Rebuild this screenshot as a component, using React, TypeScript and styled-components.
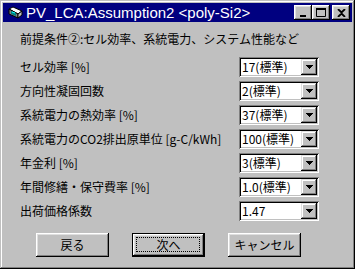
import React from 'react'
import styled, { createGlobalStyle } from 'styled-components'

const GlobalStyle = createGlobalStyle`
  html, body { margin: 0; padding: 0; background: #c0c0c0; }
  * { box-sizing: border-box; }
`

const jp = `"Noto Sans CJK JP", "Liberation Sans", sans-serif`

const Window = styled.div`
  width: 355px;
  height: 269px;
  padding: 3px;
  background: #c0c0c0;
  box-shadow: inset -1px -1px #000, inset 1px 1px #c0c0c0,
    inset -2px -2px #808080, inset 2px 2px #fff;
  font-family: ${jp};
  font-size: 12px;
  color: #000;
  display: flex;
  flex-direction: column;
`

const TitleBar = styled.div`
  height: 19px;
  background: #000080;
  display: flex;
  align-items: center;
  padding: 0 2px 0 5px;
`

const TitleText = styled.div`
  flex: 1;
  margin-left: 2px;
  color: #fff;
  font-family: "Liberation Sans", Arial, sans-serif;
  font-size: 15px;
  line-height: 19px;
  white-space: nowrap;
`

const CaptionButtons = styled.div`
  display: flex;
  align-items: center;
`

const CaptionButton = styled.div<{ $gap?: boolean }>`
  width: 18px;
  height: 15px;
  margin-left: ${p => (p.$gap ? '2px' : '0')};
  background: #c0c0c0;
  box-shadow: inset -1px -1px #000, inset 1px 1px #fff,
    inset -2px -2px #808080, inset 2px 2px #dfdfdf;
  display: flex;
  align-items: center;
  justify-content: center;
`

const Body = styled.div`
  flex: 1;
  padding: 7px 0 0 17px;
  display: flex;
  flex-direction: column;
`

const Intro = styled.div`
  line-height: 20px;
  white-space: nowrap;
`

const Form = styled.div`
  margin-top: 6px;
  display: grid;
  grid-template-columns: 219px 80px;
  grid-auto-rows: 24px;
  align-items: center;
`

const Label = styled.div`
  white-space: nowrap;
  line-height: 20px;
`

const Combo = styled.div`
  height: 20px;
  background: #fff;
  display: flex;
  align-items: center;
  padding: 2px;
  box-shadow: inset 1px 1px #808080, inset -1px -1px #fff,
    inset 2px 2px #000, inset -2px -2px #c0c0c0;
`

const ComboValue = styled.div`
  flex: 1;
  padding-left: 1px;
  line-height: 16px;
  white-space: nowrap;
  overflow: hidden;
`

const DropButton = styled.div`
  width: 16px;
  height: 16px;
  background: #c0c0c0;
  box-shadow: inset -1px -1px #000, inset 1px 1px #dfdfdf,
    inset -2px -2px #808080, inset 2px 2px #fff;
  display: flex;
  align-items: center;
  justify-content: center;
`

const ButtonRow = styled.div`
  margin-top: 10px;
  padding-left: 16px;
  display: flex;
  gap: 23px;
`

const PushButton = styled.div<{ $default?: boolean }>`
  width: 73px;
  height: 24px;
  background: #c0c0c0;
  display: flex;
  align-items: center;
  justify-content: center;
  position: relative;
  border: ${p => (p.$default ? '1px solid #000' : 'none')};
  box-shadow: inset -1px -1px #000, inset 1px 1px #fff,
    inset -2px -2px #808080, inset 2px 2px #dfdfdf;
  line-height: 16px;
`

const FocusRing = styled.div`
  position: absolute;
  inset: 3px 4px 4px 3px;
  border: 1px dotted #000;
`

const Arrow = () => (
  <svg width="7" height="4" viewBox="0 0 7 4">
    <path d="M0 0h7v1H0zM1 1h5v1H1zM2 2h3v1H2zM3 3h1v1H3z" fill="#000" />
  </svg>
)

const AppIcon = () => (
  <svg width="16" height="16" viewBox="0 0 16 16">
    <path d="M1 4l4-2 9 4-4 3z" fill="#fff" stroke="#000" strokeWidth="1" />
    <path d="M1 4v5l9 4v-4z" fill="#808080" stroke="#000" strokeWidth="1" />
    <path d="M10 9l4-3v4l-4 3z" fill="#c0c0c0" stroke="#000" strokeWidth="1" />
    <path d="M3 6l5 2v3l-5-2z" fill="#008080" />
    <path d="M4 7l3 1" stroke="#00ffff" strokeWidth="1" />
  </svg>
)

const rows = [
  ['セル効率 [%]', '17(標準)'],
  ['方向性凝固回数', '2(標準)'],
  ['系統電力の熱効率 [%]', '37(標準)'],
  ['系統電力のCO2排出原単位 [g-C/kWh]', '100(標準)'],
  ['年金利 [%]', '3(標準)'],
  ['年間修繕・保守費率 [%]', '1.0(標準)'],
  ['出荷価格係数', '1.47'],
]

const App = () => {
  return (
    <>
      <GlobalStyle />
      <Window>
        <TitleBar>
          <AppIcon />
          <TitleText>PV_LCA:Assumption2 &lt;poly-Si2&gt;</TitleText>
          <CaptionButtons>
            <CaptionButton>
              <svg width="8" height="9" viewBox="0 0 8 9">
                <rect x="1" y="7" width="6" height="2" fill="#000" />
              </svg>
            </CaptionButton>
            <CaptionButton>
              <svg width="10" height="9" viewBox="0 0 10 9">
                <path d="M0.5 1.5h9v7h-9z" fill="none" stroke="#000" />
                <rect x="0" y="0" width="10" height="2" fill="#000" />
              </svg>
            </CaptionButton>
            <CaptionButton $gap>
              <svg width="9" height="8" viewBox="0 0 9 8">
                <path d="M1 0l3.5 3.5L8 0M1 8l3.5-3.5L8 8" stroke="#000" strokeWidth="1.8" fill="none" />
              </svg>
            </CaptionButton>
          </CaptionButtons>
        </TitleBar>
        <Body>
          <Intro>前提条件②:セル効率、系統電力、システム性能など</Intro>
          <Form>
            {rows.map(([label, value]) => (
              <React.Fragment key={label}>
                <Label>{label}</Label>
                <Combo>
                  <ComboValue>{value}</ComboValue>
                  <DropButton><Arrow /></DropButton>
                </Combo>
              </React.Fragment>
            ))}
          </Form>
          <ButtonRow>
            <PushButton>戻る</PushButton>
            <PushButton $default><FocusRing />次へ</PushButton>
            <PushButton>キャンセル</PushButton>
          </ButtonRow>
        </Body>
      </Window>
    </>
  )
}

export default App
